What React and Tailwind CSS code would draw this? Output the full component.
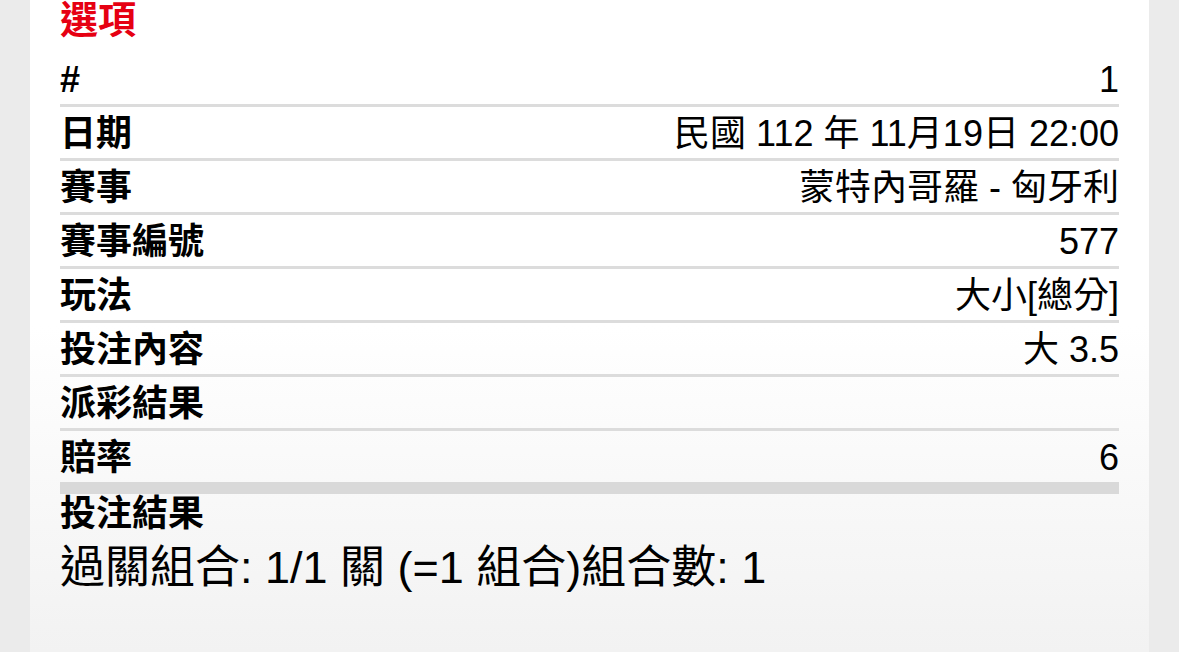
import React from 'react'

const rows = [
  { label: '#', value: '1' },
  { label: '日期', value: '民國 112 年 11月19日 22:00' },
  { label: '賽事', value: '蒙特內哥羅 - 匈牙利' },
  { label: '賽事編號', value: '577' },
  { label: '玩法', value: '大小[總分]' },
  { label: '投注內容', value: '大 3.5' },
  { label: '派彩結果', value: '' },
  { label: '賠率', value: '6', thick: true },
]

const font = { fontFamily: '"Liberation Sans", "Noto Sans CJK TC", sans-serif' }

const App = () => {
  return (
    <div className="flex min-h-[652px] bg-[#ebebeb] px-[30px]" style={font}>
      <div className="flex-1 bg-gradient-to-b from-white via-white to-[#f2f2f2] px-[30px]">
        <h1 className="text-[38px] leading-[40px] font-bold text-[#e60012] mb-[13px]">選項</h1>

        <div className="text-black">
          {rows.map((row) => (
            <div
              key={row.label}
              className={
                row.thick
                  ? 'flex items-center justify-between h-[63px] pt-[2px] border-b-[12px] border-[#d9d9d9]'
                  : 'flex items-center justify-between h-[54px] pt-[2px] border-b-[3px] border-[#dcdcdc]'
              }
            >
              <span className="text-[36px] leading-[49px] font-bold">{row.label}</span>
              <span className="text-[36px] leading-[49px]">{row.value}</span>
            </div>
          ))}
        </div>

        <div className="text-[36px] leading-[36px] font-bold mt-[2px]">投注結果</div>
        <div className="text-[45px] leading-[52px] mt-[10px]">過關組合: 1/1 關 (=1 組合)組合數: 1</div>
      </div>
    </div>
  )
}

export default App
